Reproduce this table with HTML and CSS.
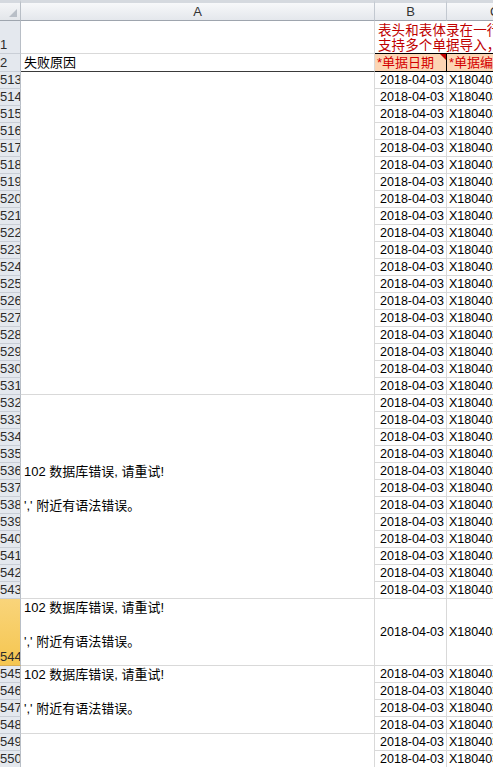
FILE: index.html
```html
<!DOCTYPE html>
<html lang="zh-CN">
<head>
<meta charset="utf-8">
<title>Sheet</title>
<link rel="stylesheet" href="styles.css">
</head>
<body>
<div class="sheet">
  <div class="corner"><svg class="corner-tri" width="8" height="8" viewBox="0 0 8 8"><polygon points="8,0 8,8 0,8" fill="#b9bfc7"/></svg></div>
  <div class="colhead">A</div>
  <div class="colhead">B</div>
  <div class="colhead colhead-c">C</div>

  <div class="rh">1</div>
  <div class="cell"></div>
  <div class="cell note-cell"><div class="note">表头和表体录在一行，<br>支持多个单据导入，</div></div>
  <div class="cell row1-c"></div>

  <div class="rh">2</div>
  <div class="cell row2-a">失败原因</div>
  <div class="cell req req-b">*单据日期</div>
  <div class="cell req req-c">*单据编号</div>

  <div class="rh">513</div>
  <div class="cell a-merge span19"></div>
  <div class="cell date">2018-04-03</div><div class="cell code">X180403</div>
  <div class="rh">514</div><div class="cell date">2018-04-03</div><div class="cell code">X180403</div>
  <div class="rh">515</div><div class="cell date">2018-04-03</div><div class="cell code">X180403</div>
  <div class="rh">516</div><div class="cell date">2018-04-03</div><div class="cell code">X180403</div>
  <div class="rh">517</div><div class="cell date">2018-04-03</div><div class="cell code">X180403</div>
  <div class="rh">518</div><div class="cell date">2018-04-03</div><div class="cell code">X180403</div>
  <div class="rh">519</div><div class="cell date">2018-04-03</div><div class="cell code">X180403</div>
  <div class="rh">520</div><div class="cell date">2018-04-03</div><div class="cell code">X180403</div>
  <div class="rh">521</div><div class="cell date">2018-04-03</div><div class="cell code">X180403</div>
  <div class="rh">522</div><div class="cell date">2018-04-03</div><div class="cell code">X180403</div>
  <div class="rh">523</div><div class="cell date">2018-04-03</div><div class="cell code">X180403</div>
  <div class="rh">524</div><div class="cell date">2018-04-03</div><div class="cell code">X180403</div>
  <div class="rh">525</div><div class="cell date">2018-04-03</div><div class="cell code">X180403</div>
  <div class="rh">526</div><div class="cell date">2018-04-03</div><div class="cell code">X180403</div>
  <div class="rh">527</div><div class="cell date">2018-04-03</div><div class="cell code">X180403</div>
  <div class="rh">528</div><div class="cell date">2018-04-03</div><div class="cell code">X180403</div>
  <div class="rh">529</div><div class="cell date">2018-04-03</div><div class="cell code">X180403</div>
  <div class="rh">530</div><div class="cell date">2018-04-03</div><div class="cell code">X180403</div>
  <div class="rh">531</div><div class="cell date">2018-04-03</div><div class="cell code">X180403</div>

  <div class="rh">532</div>
  <div class="cell a-merge span12 pad4"><div class="err">102 数据库错误, 请重试!<br><br>',' 附近有语法错误。</div></div>
  <div class="cell date">2018-04-03</div><div class="cell code">X180403</div>
  <div class="rh">533</div><div class="cell date">2018-04-03</div><div class="cell code">X180403</div>
  <div class="rh">534</div><div class="cell date">2018-04-03</div><div class="cell code">X180403</div>
  <div class="rh">535</div><div class="cell date">2018-04-03</div><div class="cell code">X180403</div>
  <div class="rh">536</div><div class="cell date">2018-04-03</div><div class="cell code">X180403</div>
  <div class="rh">537</div><div class="cell date">2018-04-03</div><div class="cell code">X180403</div>
  <div class="rh">538</div><div class="cell date">2018-04-03</div><div class="cell code">X180403</div>
  <div class="rh">539</div><div class="cell date">2018-04-03</div><div class="cell code">X180403</div>
  <div class="rh">540</div><div class="cell date">2018-04-03</div><div class="cell code">X180403</div>
  <div class="rh">541</div><div class="cell date">2018-04-03</div><div class="cell code">X180403</div>
  <div class="rh">542</div><div class="cell date">2018-04-03</div><div class="cell code">X180403</div>
  <div class="rh">543</div><div class="cell date">2018-04-03</div><div class="cell code">X180403</div>

  <div class="rh rh-sel">544</div>
  <div class="cell a-merge"><div class="err">102 数据库错误, 请重试!<br><br>',' 附近有语法错误。</div></div>
  <div class="cell date">2018-04-03</div><div class="cell code">X180403</div>

  <div class="rh">545</div>
  <div class="cell a-merge span4"><div class="err">102 数据库错误, 请重试!<br><br>',' 附近有语法错误。</div></div>
  <div class="cell date">2018-04-03</div><div class="cell code">X180403</div>
  <div class="rh">546</div><div class="cell date">2018-04-03</div><div class="cell code">X180403</div>
  <div class="rh">547</div><div class="cell date">2018-04-03</div><div class="cell code">X180403</div>
  <div class="rh">548</div><div class="cell date">2018-04-03</div><div class="cell code">X180403</div>

  <div class="rh">549</div>
  <div class="cell a-merge span2"></div>
  <div class="cell date">2018-04-03</div><div class="cell code">X180403</div>
  <div class="rh">550</div><div class="cell date">2018-04-03</div><div class="cell code">X180403</div>
</div>
</body>
</html>
```

FILE: styles.css
```css
html, body {
  margin: 0;
  padding: 0;
  background: #ffffff;
  overflow: hidden;
}

.sheet {
  display: grid;
  grid-template-columns: 21px 354px 72px 120px;
  grid-template-rows: 21px 33px 18px repeat(31, 17px) 67px repeat(6, 17px);
  width: 493px;
  height: 767px;
  overflow: hidden;
  font-family: "Liberation Sans", "Noto Sans CJK SC", sans-serif;
  font-size: 12.5px;
  color: #000;
}

.sheet > div {
  box-sizing: border-box;
  min-width: 0;
  overflow: hidden;
  white-space: nowrap;
}

.corner {
  position: relative;
  background: linear-gradient(#f4f5f7, #e3e6ea);
  border-top: 3px solid #d5d9df;
  border-right: 1px solid #b8bec6;
  border-bottom: 1px solid #9ea5ae;
}

.corner-tri {
  position: absolute;
  right: 3px;
  bottom: 3px;
}

.colhead {
  display: flex;
  align-items: center;
  justify-content: center;
  background: linear-gradient(#f7f8fa, #e4e7ec);
  border-top: 3px solid #d5d9df;
  border-right: 1px solid #c2c8d0;
  border-bottom: 1px solid #9ea5ae;
  color: #333;
  font-size: 13px;
}

.colhead-c {
  justify-content: flex-start;
  padding-left: 43px;
}

.rh {
  display: flex;
  align-items: flex-end;
  justify-content: flex-end;
  padding-right: 2px;
  background: #e4e8ee;
  border-right: 1px solid #b8bec6;
  border-bottom: 1px solid #c9ced6;
  color: #2b2b2b;
  font-size: 13px;
  line-height: 16px;
  direction: rtl;
}

.rh-sel {
  background: linear-gradient(#f9d47a, #f5c650);
  border-bottom-color: #d9ad52;
}

.cell {
  display: flex;
  align-items: center;
  padding: 0 3px;
  border-right: 1px solid #d9d9d9;
  border-bottom: 1px solid #d9d9d9;
  line-height: 16px;
}

.note-cell {
  overflow: visible !important;
  position: relative;
  z-index: 1;
  border-right: none;
  border-bottom: 1px solid #000;
  align-items: flex-end;
  padding-bottom: 0;
}

.note {
  color: #c00000;
  font-size: 13.5px;
  line-height: 15px;
  letter-spacing: 0.1px;
  padding-left: 0;
}

.row1-c {
  border-bottom: 1px solid #000;
}

.row2-a {
  border-bottom: 1px solid #3a3a3a;
  font-size: 13px;
}

.req {
  position: relative;
  background: #fcd5b4;
  color: #d40000;
  border-bottom: 1px solid #000;
  border-right: 1px solid #000;
  font-size: 13px;
  padding-left: 2px;
}

.req-b::after {
  content: "";
  position: absolute;
  top: 0;
  right: 0;
  border-top: 6px solid #c00000;
  border-left: 6px solid transparent;
}

.date {
  justify-content: flex-end;
  padding-right: 2px;
}

.code {
  padding-left: 2px;
}

.a-merge {
  align-items: flex-start;
  padding-left: 3px;
}

.span19 { grid-row: span 19; }
.span12 { grid-row: span 12; }
.span4 { grid-row: span 4; }
.span2 { grid-row: span 2; }

.pad4 {
  padding-top: 68px;
}

.err {
  font-size: 13px;
  line-height: 17px;
}
```
